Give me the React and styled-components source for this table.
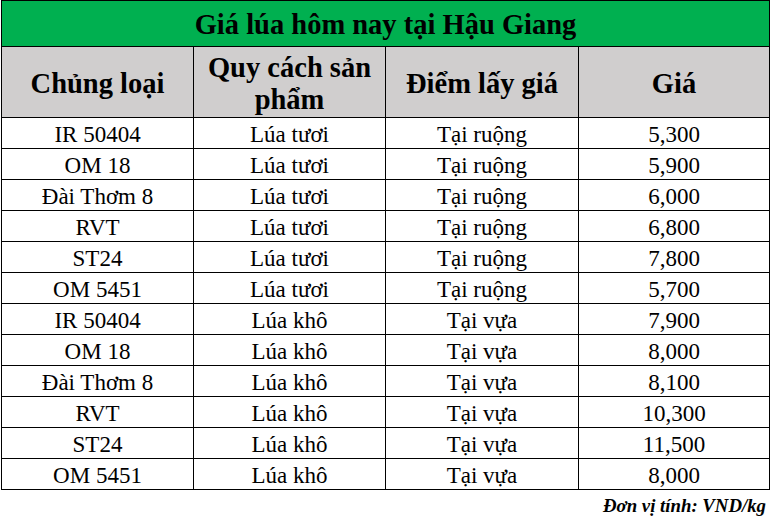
import React from 'react';
import styled, { createGlobalStyle } from 'styled-components';

const GlobalStyle = createGlobalStyle`
  html, body {
    margin: 0;
    padding: 0;
    background: #ffffff;
  }
  body {
    font-family: "Liberation Serif", "Times New Roman", serif;
    color: #000000;
  }
`;

const Page = styled.div`
  width: 770px;
  padding: 0 1px 0 1px;
  box-sizing: border-box;
`;

const Table = styled.table`
  width: 768px;
  border-collapse: collapse;
  table-layout: fixed;
  font-family: "Liberation Serif", "Times New Roman", serif;
`;

const TitleCell = styled.th`
  height: 43px;
  padding: 2px 0 0;
  background: #00b050;
  border: 1px solid #000;
  font-size: 28.5px;
  line-height: 32px;
  font-weight: bold;
  text-align: center;
  vertical-align: middle;
`;

const HeadCell = styled.th`
  height: 67px;
  padding: 3px 4px 0;
  background: #d0cece;
  border: 1px solid #000;
  font-size: 28.5px;
  line-height: 32px;
  font-weight: bold;
  text-align: center;
  vertical-align: middle;
`;

const Cell = styled.td`
  height: 27px;
  padding: 3px 0 0;
  border: 1px solid #000;
  font-size: 23px;
  line-height: 26px;
  text-align: center;
  vertical-align: middle;
  white-space: nowrap;
`;

const Note = styled.div`
  margin-top: 5px;
  padding-right: 3px;
  text-align: right;
  font-size: 18.8px;
  font-weight: bold;
  font-style: italic;
`;

const rows = [
  ['IR 50404', 'Lúa tươi', 'Tại ruộng', '5,300'],
  ['OM 18', 'Lúa tươi', 'Tại ruộng', '5,900'],
  ['Đài Thơm 8', 'Lúa tươi', 'Tại ruộng', '6,000'],
  ['RVT', 'Lúa tươi', 'Tại ruộng', '6,800'],
  ['ST24', 'Lúa tươi', 'Tại ruộng', '7,800'],
  ['OM 5451', 'Lúa tươi', 'Tại ruộng', '5,700'],
  ['IR 50404', 'Lúa khô', 'Tại vựa', '7,900'],
  ['OM 18', 'Lúa khô', 'Tại vựa', '8,000'],
  ['Đài Thơm 8', 'Lúa khô', 'Tại vựa', '8,100'],
  ['RVT', 'Lúa khô', 'Tại vựa', '10,300'],
  ['ST24', 'Lúa khô', 'Tại vựa', '11,500'],
  ['OM 5451', 'Lúa khô', 'Tại vựa', '8,000'],
];

export default function App() {
  return (
    <Page>
      <GlobalStyle />
      <Table>
        <colgroup>
          <col style={{ width: 192 }} />
          <col style={{ width: 192 }} />
          <col style={{ width: 193 }} />
          <col style={{ width: 191 }} />
        </colgroup>
        <thead>
          <tr>
            <TitleCell colSpan={4}>Giá lúa hôm nay tại Hậu Giang</TitleCell>
          </tr>
          <tr>
            <HeadCell>Chủng loại</HeadCell>
            <HeadCell>Quy cách sản phẩm</HeadCell>
            <HeadCell>Điểm lấy giá</HeadCell>
            <HeadCell>Giá</HeadCell>
          </tr>
        </thead>
        <tbody>
          {rows.map((r, i) => (
            <tr key={i}>
              {r.map((v, j) => (
                <Cell key={j}>{v}</Cell>
              ))}
            </tr>
          ))}
        </tbody>
      </Table>
      <Note>Đơn vị tính: VND/kg</Note>
    </Page>
  );
}
